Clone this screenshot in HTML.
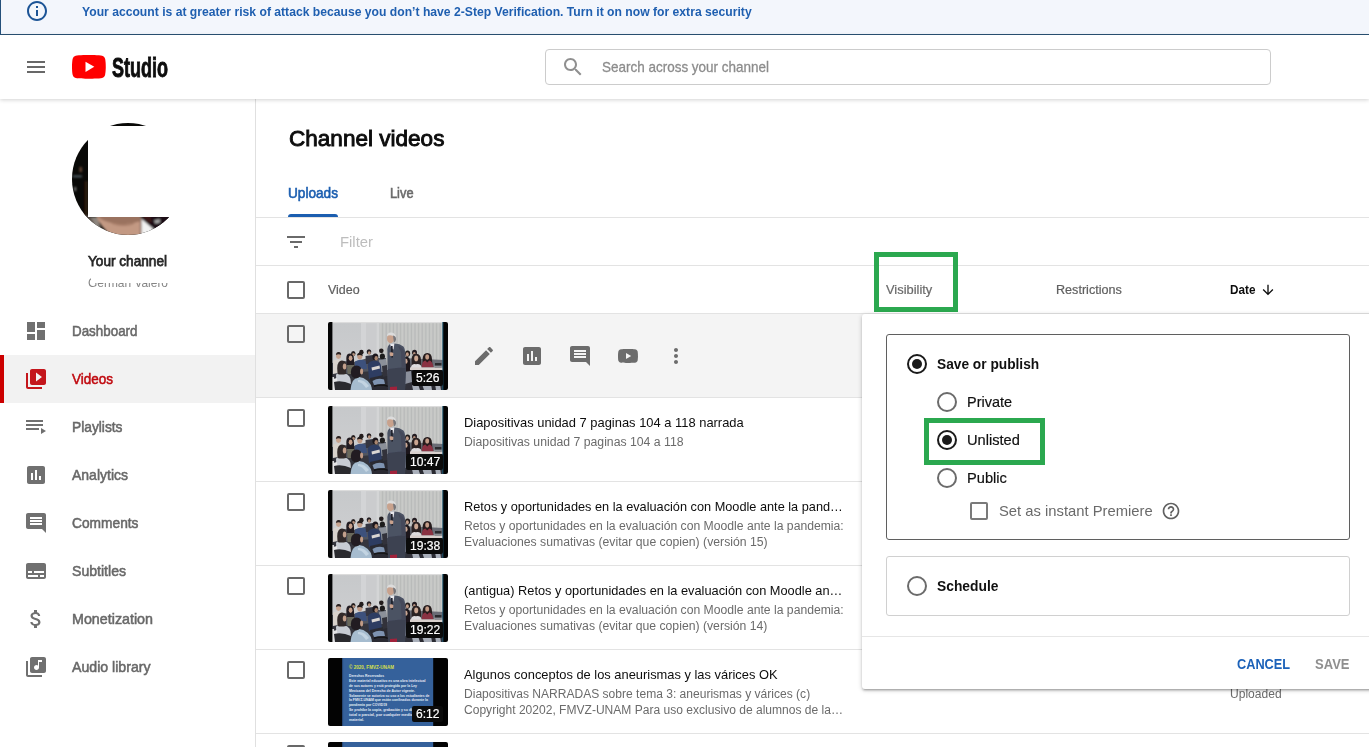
<!DOCTYPE html>
<html lang="en"><head><meta charset="utf-8"><title>Channel videos - YouTube Studio</title>
<style>
*{box-sizing:border-box}
html,body{margin:0;padding:0}
body{width:1369px;height:747px;overflow:hidden;position:relative;background:#fff;font-family:"Liberation Sans",Arial,sans-serif}
.t{position:absolute;white-space:nowrap;line-height:1;transform-origin:0 50%;display:block}
.ic{position:absolute;display:block}
.abs{position:absolute}
.hl{position:absolute;height:1px;background:#e3e3e3}
#banner{position:absolute;left:0;top:0;width:1369px;height:35px;background:#f3f6fc;border-left:1px solid #24507a;border-bottom:1px solid #2a5274}
#header{position:absolute;left:0;top:35px;width:1369px;height:64px;background:#fff;box-shadow:0 1px 4px rgba(0,0,0,.18);z-index:5}
#search{position:absolute;left:545px;top:14px;width:726px;height:36px;border:1px solid #ccc;border-radius:4px;background:#fff}
#side{position:absolute;left:0;top:99px;width:256px;height:648px;background:#fff;border-right:1px solid #e0e0e0}
#main{position:absolute;left:256px;top:99px;width:1113px;height:648px;background:#fff}
.nav{position:absolute;left:0;width:255px;height:48px}
.nav.on{background:#f2f2f2;border-left:4px solid #cc0000}
.cb{position:absolute;width:18px;height:18px;border:2px solid #686868;border-radius:2px;background:transparent}
.row{position:absolute;left:256px;width:1113px;height:84px;border-top:1px solid #e3e3e3}
.thumb{position:absolute;left:328px;width:120px;height:68px;border-radius:2px;overflow:hidden;display:block}
.thumb text{font-family:"Liberation Sans",Arial,sans-serif}
.dur{position:absolute;height:16px;background:#0b0b0b;border-radius:2px}
.green{position:absolute;border:5px solid #2ba84f}
.radio{position:absolute;width:20px;height:20px;border-radius:50%;border:2px solid #6b6b6b;background:#fff}
.radio.on{border-color:#1a1a1a}
.radio.on:after{content:"";position:absolute;left:3px;top:3px;width:10px;height:10px;border-radius:50%;background:#1a1a1a}
#pop{position:absolute;left:862px;top:314px;width:520px;height:375px;background:#fff;border-radius:3px;box-shadow:0 2px 2px 0 rgba(0,0,0,.14),0 3px 1px -2px rgba(0,0,0,.12),0 1px 5px 0 rgba(0,0,0,.2);z-index:8}
</style></head>
<body>
<div role="alert">
<div id="banner"></div>
<svg class="ic" style="left:25px;top:-1px" width="24" height="24" viewBox="0 0 24 24" fill="#1c5496" ><path d="M11 17h2v-6h-2v6zm1-15C6.48 2 2 6.48 2 12s4.48 10 10 10 10-4.48 10-10S17.52 2 12 2zm0 18c-4.41 0-8-3.59-8-8s3.59-8 8-8 8 3.59 8 8-3.59 8-8 8zM11 9h2V7h-2v2z"/></svg>
<span class="t" style="left:81.5px;top:5px;font-size:13px;color:#1f5fb0;font-weight:700;transform:scaleX(0.9351);">Your account is at greater risk of attack because you don’t have 2-Step Verification. Turn it on now for extra security</span>
</div>
<header id="header">
<svg class="ic" style="left:24px;top:20px" width="24" height="24" viewBox="0 0 24 24" fill="#686868" ><path d="M3 18h18v-2H3v2zm0-5h18v-2H3v2zm0-7v2h18V6H3z"/></svg>
<svg class="ic" style="left:72.2px;top:19.9px" width="33.8" height="23.7" viewBox="0 0 28.57 20" preserveAspectRatio="none"><path fill="#ff0000" d="M27.9727 3.12324C27.6435 1.89323 26.6768 0.926623 25.4468 0.597366C23.2197 0 14.285 0 14.285 0C14.285 0 5.35042 0 3.12323 0.597366C1.89323 0.926623 0.926623 1.89323 0.597366 3.12324C0 5.35042 0 10 0 10C0 10 0 14.6496 0.597366 16.8768C0.926623 18.1068 1.89323 19.0734 3.12323 19.4026C5.35042 20 14.285 20 14.285 20C14.285 20 23.2197 20 25.4468 19.4026C26.6768 19.0734 27.6435 18.1068 27.9727 16.8768C28.5701 14.6496 28.5701 10 28.5701 10C28.5701 10 28.5677 5.35042 27.9727 3.12324Z"/><path fill="#fff" d="M11.4253 14.2854L18.8477 10.0004L11.4253 5.71533V14.2854Z"/></svg>
<span class="t" style="left:112px;top:20px;font-size:27px;color:#0d0d0d;font-weight:700;-webkit-text-stroke:0.9px #0d0d0d;transform:scaleX(0.6668);">Studio</span>
<div id="search"></div>
<svg class="ic" style="left:561px;top:20.2px" width="24" height="24" viewBox="0 0 24 24" fill="#909090" ><path d="M15.5 14h-.79l-.28-.27C15.41 12.59 16 11.11 16 9.5 16 5.91 13.09 3 9.5 3S3 5.91 3 9.5 5.91 16 9.5 16c1.61 0 3.09-.59 4.23-1.57l.27.28v.79l5 4.99L20.49 19l-4.99-5zm-6 0C7.01 14 5 11.99 5 9.5S7.01 5 9.5 5 14 7.01 14 9.5 11.99 14 9.5 14z"/></svg>
<span class="t" style="left:602px;top:24px;font-size:15px;color:#8c8c8c;-webkit-text-stroke:0.3px #8c8c8c;transform:scaleX(0.8982);">Search across your channel</span>
</header>
<nav>
<div id="side"></div>
<svg class="ic" style="left:72px;top:122.9px" width="112" height="112" viewBox="0 0 112 112">
<defs><clipPath id="avc"><circle cx="56" cy="56" r="56"/></clipPath><filter id="avb" x="-10%" y="-10%" width="120%" height="120%"><feGaussianBlur stdDeviation="0.9"/></filter></defs>
<g clip-path="url(#avc)"><rect width="112" height="112" fill="#090907"/>
<g filter="url(#avb)">
<rect x="7.5" y="44" width="2.4" height="5" fill="#6a4a3a"/>
<rect x="1" y="52.6" width="9" height="1.6" fill="#5c6e78"/>
<rect x="12.5" y="58" width="3.5" height="36" fill="#2c1b0c"/>
<rect x="2.6" y="64" width="1.2" height="4" fill="#c8c8c8"/>
<path d="M6 94 L26 94 L30 112 L14 112z" fill="#8d857e"/>
<path d="M6 93 L18 93 L22 100 L10 104z" fill="#5a5048"/>
<path d="M24 92 L69 92 L69 113 L40 113 Q28 104 24 92z" fill="#c39983"/>
<path d="M24 92 L69 92 L69 98 Q58 102 46 101 Q32 100 24 92z" fill="#9a725e"/>
<path d="M40 99 Q52 103 62 99 L62 101 Q52 105 40 101z" fill="#a67c67"/>
<path d="M68.6 94 L82 106 L74 113 L68.6 113z" fill="#f2f2f2"/>
<path d="M68 96 L69.4 96 L69.4 113 L68 113z" fill="#7a5848"/>
<path d="M68.6 92 L112 92 L112 100 L84 108 L68.6 95z" fill="#1a1112"/>
<path d="M69 92 L78 92 L80 99 L76 100z" fill="#3a1414"/>
<path d="M82 97.5 L87.6 96 L88.4 99.2 L83.4 100.8z" fill="#a8a8a8"/>
</g></g></svg>
<div class="abs" style="left:88px;top:126.2px;width:100px;height:90.6px;background:#fff"></div>
<span class="t" style="left:88px;top:253px;font-size:15px;color:#282828;-webkit-text-stroke:0.75px #282828;transform:scaleX(0.9078);">Your channel</span>
<span class="t" style="left:88px;top:276px;font-size:13px;color:#858585;transform:scaleX(0.9176);">German Valero</span>
<div class="abs" style="left:91px;top:270px;width:84px;height:13.3px;background:#fff"></div>
<div class="nav" style="top:307px"></div>
<svg class="ic" style="left:24px;top:319px" width="24" height="24" viewBox="0 0 24 24" fill="#707070" ><path d="M3 13h8V3H3v10zm0 8h8v-6H3v6zm10 0h8V11h-8v10zm0-18v6h8V3h-8z"/></svg>
<span class="t" style="left:72px;top:323px;font-size:15px;color:#686868;-webkit-text-stroke:0.55px #686868;transform:scaleX(0.8926);">Dashboard</span>
<div class="nav on" style="top:355px"></div>
<svg class="ic" style="left:24px;top:367px" width="24" height="24" viewBox="0 0 24 24" fill="#c4161c" ><path d="M4 6H2v14c0 1.1.9 2 2 2h14v-2H4V6zm16-4H8c-1.1 0-2 .9-2 2v12c0 1.1.9 2 2 2h12c1.1 0 2-.9 2-2V4c0-1.1-.9-2-2-2zm-8 12.5v-9l6 4.5-6 4.5z"/></svg>
<span class="t" style="left:72px;top:371px;font-size:15px;color:#c00a10;-webkit-text-stroke:0.55px #c00a10;transform:scaleX(0.8992);">Videos</span>
<div class="nav" style="top:403px"></div>
<svg class="ic" style="left:24px;top:415px" width="24" height="24" viewBox="0 0 24 24" fill="#707070" ><path d="M19 9H2v2h17V9zm0-4H2v2h17V5zM2 15h13v-2H2v2zm15-2v6l5-3-5-3z"/></svg>
<span class="t" style="left:72px;top:419px;font-size:15px;color:#686868;-webkit-text-stroke:0.55px #686868;transform:scaleX(0.9180);">Playlists</span>
<div class="nav" style="top:451px"></div>
<svg class="ic" style="left:24px;top:463px" width="24" height="24" viewBox="0 0 24 24" fill="#707070" ><path d="M19 3H5c-1.1 0-2 .9-2 2v14c0 1.1.9 2 2 2h14c1.1 0 2-.9 2-2V5c0-1.1-.9-2-2-2zM9 17H7v-7h2v7zm4 0h-2V7h2v10zm4 0h-2v-4h2v4z"/></svg>
<span class="t" style="left:72px;top:467px;font-size:15px;color:#686868;-webkit-text-stroke:0.55px #686868;transform:scaleX(0.9330);">Analytics</span>
<div class="nav" style="top:499px"></div>
<svg class="ic" style="left:24px;top:511px" width="24" height="24" viewBox="0 0 24 24" fill="#707070" ><path d="M21.99 4c0-1.1-.89-2-1.99-2H4c-1.1 0-2 .9-2 2v12c0 1.1.9 2 2 2h14l4 4-.01-18zM18 14H6v-2h12v2zm0-3H6V9h12v2zm0-3H6V6h12v2z"/></svg>
<span class="t" style="left:72px;top:515px;font-size:15px;color:#686868;-webkit-text-stroke:0.55px #686868;transform:scaleX(0.9170);">Comments</span>
<div class="nav" style="top:547px"></div>
<svg class="ic" style="left:24px;top:559px" width="24" height="24" viewBox="0 0 24 24" fill="#707070" ><path d="M20 4H4c-1.1 0-2 .9-2 2v12c0 1.1.9 2 2 2h16c1.1 0 2-.9 2-2V6c0-1.1-.9-2-2-2zM4 12h4v2H4v-2zm10 6H4v-2h10v2zm6 0h-4v-2h4v2zm0-4H10v-2h10v2z"/></svg>
<span class="t" style="left:72px;top:563px;font-size:15px;color:#686868;-webkit-text-stroke:0.55px #686868;transform:scaleX(0.9386);">Subtitles</span>
<div class="nav" style="top:595px"></div>
<svg class="ic" style="left:24px;top:607px" width="24" height="24" viewBox="0 0 24 24" fill="#707070" ><path d="M11.8 10.9c-2.27-.59-3-1.2-3-2.15 0-1.09 1.01-1.85 2.7-1.85 1.78 0 2.44.85 2.5 2.1h2.21c-.07-1.72-1.12-3.3-3.21-3.81V3h-3v2.16c-1.94.42-3.5 1.68-3.5 3.61 0 2.31 1.91 3.46 4.7 4.13 2.5.6 3 1.48 3 2.41 0 .69-.49 1.79-2.7 1.79-2.06 0-2.87-.92-2.98-2.1h-2.2c.12 2.19 1.76 3.42 3.68 3.83V21h3v-2.15c1.95-.37 3.5-1.5 3.5-3.55 0-2.84-2.43-3.81-4.7-4.4z"/></svg>
<span class="t" style="left:72px;top:611px;font-size:15px;color:#686868;-webkit-text-stroke:0.55px #686868;transform:scaleX(0.9524);">Monetization</span>
<div class="nav" style="top:643px"></div>
<svg class="ic" style="left:24px;top:655px" width="24" height="24" viewBox="0 0 24 24" fill="#707070" ><path d="M20 2H8c-1.1 0-2 .9-2 2v12c0 1.1.9 2 2 2h12c1.1 0 2-.9 2-2V4c0-1.1-.9-2-2-2zm-2 5h-3v5.5c0 1.38-1.12 2.5-2.5 2.5S10 13.88 10 12.5s1.12-2.5 2.5-2.5c.57 0 1.08.19 1.5.51V5h4v2zM4 6H2v14c0 1.1.9 2 2 2h14v-2H4V6z"/></svg>
<span class="t" style="left:72px;top:659px;font-size:15px;color:#686868;-webkit-text-stroke:0.55px #686868;transform:scaleX(0.9416);">Audio library</span>
</nav>
<main>
<div id="main"></div>
<span class="t" style="left:288.6px;top:128px;font-size:22px;color:#0d0d0d;-webkit-text-stroke:0.9px #0d0d0d;transform:scaleX(1.0247);">Channel videos</span>
<span class="t" style="left:288px;top:185px;font-size:15px;color:#1b5eb0;-webkit-text-stroke:0.6px #1b5eb0;transform:scaleX(0.9085);">Uploads</span>
<span class="t" style="left:390px;top:185px;font-size:15px;color:#6a6a6a;-webkit-text-stroke:0.6px #6a6a6a;transform:scaleX(0.8540);">Live</span>
<div class="abs" style="left:288px;top:214px;width:50px;height:3px;background:#1b5eb0;border-radius:3px 3px 0 0"></div>
<div class="hl" style="left:256px;top:217px;width:1113px"></div>
<svg class="ic" style="left:284px;top:230px" width="24" height="24" viewBox="0 0 24 24" fill="#6a6a6a" ><path d="M10 18h4v-2h-4v2zM3 6v2h18V6H3zm3 7h12v-2H6v2z"/></svg>
<span class="t" style="left:340px;top:234px;font-size:15px;color:#bdbdbd;transform:scaleX(0.9900);">Filter</span>
<div class="hl" style="left:256px;top:265px;width:1113px"></div>
<div class="cb" style="left:287px;top:281px"></div>
<span class="t" style="left:328px;top:284px;font-size:12px;color:#606060;-webkit-text-stroke:0.2px #606060;transform:scaleX(1.0402);">Video</span>
<span class="t" style="left:886px;top:284px;font-size:12px;color:#6a6a6a;-webkit-text-stroke:0.2px #6a6a6a;transform:scaleX(1.0736);">Visibility</span>
<span class="t" style="left:1056px;top:284px;font-size:12px;color:#606060;-webkit-text-stroke:0.2px #606060;transform:scaleX(1.0497);">Restrictions</span>
<span class="t" style="left:1230.2px;top:284px;font-size:12px;color:#0d0d0d;font-weight:700;transform:scaleX(0.9765);">Date</span>
<svg class="ic" style="left:1259.6px;top:282px" width="16" height="16" viewBox="0 0 24 24" fill="#0d0d0d" ><path d="M20 12l-1.41-1.41L13 16.17V4h-2v12.17l-5.58-5.59L4 12l8 8 8-8z"/></svg>
<div class="row" style="top:313px;background:#f4f4f4;"></div>
<div class="cb" style="left:287px;top:325px"></div>
<div class="row" style="top:397px;"></div>
<div class="cb" style="left:287px;top:409px"></div>
<div class="row" style="top:481px;"></div>
<div class="cb" style="left:287px;top:493px"></div>
<div class="row" style="top:565px;"></div>
<div class="cb" style="left:287px;top:577px"></div>
<div class="row" style="top:649px;"></div>
<div class="cb" style="left:287px;top:661px"></div>
<div class="row" style="top:733px;"></div>
<div class="cb" style="left:287px;top:745px"></div>
<svg class="thumb" style="top:322px" width="120" height="68" viewBox="0 0 120 68"><defs><filter id="pb0" x="-5%" y="-5%" width="110%" height="110%"><feGaussianBlur stdDeviation="0.75"/></filter><clipPath id="pc0"><rect x="4.4" y="0" width="110.4" height="68"/></clipPath><linearGradient id="pg0" x1="0" y1="0" x2="0" y2="1"><stop offset="0" stop-color="#c6c8ca"/><stop offset="1" stop-color="#d0d1d3"/></linearGradient></defs><rect width="120" height="68" fill="#040404"/><g clip-path="url(#pc0)"><g filter="url(#pb0)"><rect x="0" y="-2" width="120" height="72" fill="url(#pg0)"/><rect x="33" y="0" width="5" height="44" fill="#d3d4d6"/><rect x="38" y="0" width="10" height="44" fill="#cbccce"/><rect x="48.5" y="0" width="3" height="44" fill="#d4d5d6"/><rect x="51.5" y="0" width="64" height="48" fill="#c2c4c3"/><rect x="52.0" y="0" width="1.5" height="48" fill="#c9cac8"/><rect x="54.2" y="0" width="0.9" height="48" fill="#b8bab9"/><rect x="55.6" y="0" width="1.5" height="48" fill="#c9cac8"/><rect x="57.8" y="0" width="0.9" height="48" fill="#b8bab9"/><rect x="59.2" y="0" width="1.5" height="48" fill="#c9cac8"/><rect x="61.4" y="0" width="0.9" height="48" fill="#b8bab9"/><rect x="62.8" y="0" width="1.5" height="48" fill="#c9cac8"/><rect x="65.0" y="0" width="0.9" height="48" fill="#b8bab9"/><rect x="66.4" y="0" width="1.5" height="48" fill="#c9cac8"/><rect x="68.6" y="0" width="0.9" height="48" fill="#b8bab9"/><rect x="70.0" y="0" width="1.5" height="48" fill="#c9cac8"/><rect x="72.2" y="0" width="0.9" height="48" fill="#b8bab9"/><rect x="73.6" y="0" width="1.5" height="48" fill="#c9cac8"/><rect x="75.8" y="0" width="0.9" height="48" fill="#b8bab9"/><rect x="77.2" y="0" width="1.5" height="48" fill="#c9cac8"/><rect x="79.4" y="0" width="0.9" height="48" fill="#b8bab9"/><rect x="80.8" y="0" width="1.5" height="48" fill="#c9cac8"/><rect x="83.0" y="0" width="0.9" height="48" fill="#b8bab9"/><rect x="84.4" y="0" width="1.5" height="48" fill="#c9cac8"/><rect x="86.6" y="0" width="0.9" height="48" fill="#b8bab9"/><rect x="88.0" y="0" width="1.5" height="48" fill="#c9cac8"/><rect x="90.2" y="0" width="0.9" height="48" fill="#b8bab9"/><rect x="91.6" y="0" width="1.5" height="48" fill="#c9cac8"/><rect x="93.8" y="0" width="0.9" height="48" fill="#b8bab9"/><rect x="95.2" y="0" width="1.5" height="48" fill="#c9cac8"/><rect x="97.4" y="0" width="0.9" height="48" fill="#b8bab9"/><rect x="98.8" y="0" width="1.5" height="48" fill="#c9cac8"/><rect x="101.0" y="0" width="0.9" height="48" fill="#b8bab9"/><rect x="102.4" y="0" width="1.5" height="48" fill="#c9cac8"/><rect x="104.6" y="0" width="0.9" height="48" fill="#b8bab9"/><rect x="106.0" y="0" width="1.5" height="48" fill="#c9cac8"/><rect x="108.2" y="0" width="0.9" height="48" fill="#b8bab9"/><rect x="109.6" y="0" width="1.5" height="48" fill="#c9cac8"/><rect x="111.8" y="0" width="0.9" height="48" fill="#b8bab9"/><rect x="113.2" y="0" width="1.5" height="48" fill="#c9cac8"/><rect x="115.4" y="0" width="0.9" height="48" fill="#b8bab9"/><rect x="0" y="-1" width="120" height="2.1" fill="#dcdcdc"/><path d="M4 41 L16 39 L26 40 L40 36 L58 36 L60 68 L4 68z" fill="#51545f"/><path d="M4 52 L60 48 L60 68 L4 68z" fill="#34363e"/><rect x="4" y="55" width="2" height="13" fill="#dcdcdc"/><path d="M74 36 L116 38 L116 48 L74 48z" fill="#6a6c74"/><path d="M5 39 Q9 36 13 38.5 L14 50 L5 52z" fill="#d8d2cc"/><ellipse cx="10.5" cy="33.6" rx="2.5" ry="3.3" fill="#c7a48f" /><path d="M7.9 33 Q8.2 29.8 10.8 30 Q13.4 30.2 13.1 33 Q10.5 31.6 7.9 33z" fill="#2b2424"/><ellipse cx="25.3" cy="31.6" rx="2.2" ry="2.6" fill="#241e1f" /><ellipse cx="25.5" cy="32.6" rx="1.4" ry="1.6" fill="#b8937f" /><ellipse cx="33.4" cy="30.2" rx="2.2" ry="2.4" fill="#231d1e" /><path d="M27 39.5 Q32 36.5 38 39 L39 47 L27 47z" fill="#3c517c"/><ellipse cx="31.8" cy="34.3" rx="2.6" ry="3.1" fill="#c09a85" /><path d="M29 33.6 Q29.4 30.6 32 30.8 Q34.8 31 34.6 34 Q32 32.4 29 33.6z" fill="#211b1c"/><path d="M18.3 36 Q18.5 31.6 22 31.6 Q25.8 31.8 26 37 L26.4 46 L18.6 46z" fill="#231d20"/><ellipse cx="22.6" cy="36.2" rx="1.9" ry="2.7" fill="#c5a08c" /><path d="M19 43 L26 43 L26.5 52 L19.5 52z" fill="#6a695c"/><ellipse cx="41" cy="29.8" rx="2.3" ry="2.5" fill="#241f20" /><ellipse cx="41.3" cy="31" rx="1.5" ry="1.7" fill="#b9947f" /><path d="M37.5 34 L45 33 L46 42 L38 42z" fill="#35363f"/><ellipse cx="53.3" cy="28.8" rx="2.3" ry="2.4" fill="#221d1f" /><ellipse cx="54.4" cy="34.4" rx="2.6" ry="3.0" fill="#1f1b1d" /><path d="M51 38 L58 37 L58.5 50 L51.5 50z" fill="#8b9099"/><path d="M39.8 43 Q41 38.6 47 38.8 Q52.4 39 53 44 L54 56 L41 57z" fill="#2e3c62"/><path d="M43.5 45.5 L51.5 43.6 L52 46.4 L44 48.4z" fill="#d9d5d2"/><ellipse cx="47.4" cy="35" rx="3.0" ry="3.6" fill="#1d191c" /><ellipse cx="48.2" cy="36.2" rx="1.7" ry="2.2" fill="#a98570" /><path d="M8 53 Q9 50 14 50.5 Q21 51.5 22.5 57 L23 63 L8.5 63z" fill="#c8ccd3"/><path d="M9.2 46 Q9.4 38.4 14 38.4 Q18.6 38.8 18.4 44 L18 52 Q13 53 9.6 52z" fill="#332c2a"/><ellipse cx="16.6" cy="44.6" rx="1.8" ry="3.0" fill="#c3a08c" /><path d="M5 57 L9 56 L10 68 L5 68z" fill="#e4e4e6"/><path d="M6 60 Q14 58 23 62 L23 68 L7 68z" fill="#2a2a2f"/><path d="M22.5 68 Q23.5 56 31 55 Q40 55.6 45.5 68z" fill="#a6bccf"/><path d="M30 58 Q36 57 41 64 L38 66 Q34 60 30 60z" fill="#c3d4e2"/><path d="M22.8 50 Q23 43.4 28.6 43.4 Q34 43.8 33.6 50 Q33.2 56 28 56.4 Q23 56 22.8 50z" fill="#231f21"/><ellipse cx="33.6" cy="49.4" rx="1.5" ry="3.0" fill="#c19b86" /><path d="M42 56 L60 52 L61 68 L44 68z" fill="#2a2b31"/><path d="M44.5 59 Q50 55.5 56 57.5 L57 62 L46 63z" fill="#7e93b0"/><path d="M46 63.5 Q53 61 60 63.5 L60 65 Q53 62.6 46 65z" fill="#131317"/><path d="M54 44 L59 43 L59.6 54 L55 55z" fill="#30323a"/><rect x="74" y="48" width="42" height="20" fill="#31333b"/><ellipse cx="79.6" cy="31.6" rx="2.6" ry="3.1" fill="#201b1d" /><ellipse cx="79.3" cy="32.3" rx="1.5" ry="2.0" fill="#c09b87" /><ellipse cx="86.5" cy="30.6" rx="2.5" ry="2.8" fill="#241e20" /><ellipse cx="86.3" cy="31.6" rx="1.3" ry="1.6" fill="#b6917d" /><path d="M74.4 41 Q74.4 34.6 78.2 34.6 Q82.2 34.8 82.2 41 L82.6 52 L74.6 52z" fill="#1c181b"/><ellipse cx="77.8" cy="39.2" rx="1.8" ry="2.6" fill="#c9a591" /><path d="M83.6 37 Q84 31.6 88.4 31.8 Q92.8 32 93 38 L93.4 46 L83.6 46z" fill="#2a2021"/><ellipse cx="88.2" cy="36.4" rx="2.0" ry="2.8" fill="#cba792" /><path d="M83 45 Q84 41.4 88 42.2 Q92.6 41.4 93.6 45 L93.6 47.6 L83 47.6z" fill="#dedcde"/><path d="M94.6 37 Q95 30.8 99.4 31 Q103.8 31.2 104 37 L104.4 43 L94.6 43z" fill="#261d1e"/><ellipse cx="99.2" cy="35" rx="2.0" ry="2.7" fill="#c49d88" /><path d="M93.8 44 Q94.4 38.8 97.4 38.6 L99.2 40.4 L101.2 38.6 Q104.6 39 105.4 45.6 L93.8 45.6z" fill="#8a3042"/><rect x="82" y="45.4" width="34" height="2.6" fill="#d9d1ce"/><rect x="107" y="41" width="6.4" height="4.2" fill="#2c2c2f"/><rect x="106" y="43.6" width="9" height="1.6" fill="#8d9096"/><path d="M76 50 L83 49 L84 60 L77 62z" fill="#8b909c"/><path d="M84 63 L112 62.4 L113 68 L85 68z" fill="#a9afba"/><path d="M90 62 L94 62 L96 68 L92 68z" fill="#2a2b31"/><path d="M103 62 L107 62 L108 68 L104 68z" fill="#2a2b31"/><path d="M59.4 30 Q58.6 23.4 63 21.8 Q70.4 20.4 75.4 24.4 Q77.4 27 77.4 34 L78 50 L77 68 L60 68 L59.4 50z" fill="#4b5264"/><path d="M60 47 L77.8 45 L77 68 L60 68z" fill="#3d4251"/><path d="M70 24 Q76 25 77 33 L77.4 46 L73.6 46 L73 30z" fill="#444a5a"/><path d="M62 21.8 L66.4 21.2 L65.6 27.4 L63.2 26z" fill="#e8e8ec"/><path d="M63 24 L64.6 24 L65 35.6 L63.2 35.6z" fill="#1d1f29"/><path d="M61.6 30.6 Q63.6 29.8 65.4 31 L65.2 33.8 Q63.4 34.6 61.8 33.6z" fill="#c9a28d"/><ellipse cx="62.6" cy="16.4" rx="3.6" ry="4.9" fill="#c8a28d" /><path d="M59 14.2 Q59.2 10.4 63.2 10.6 Q67.8 11 68 15.6 Q66 13.4 63.4 13.4 Q60.6 13 59 14.2z" fill="#dcdcdc"/><path d="M65 13.6 Q68.2 14 68 17.6 Q67.6 20 66 20.4 Q65.4 17 65 13.6z" fill="#77777b"/><path d="M62 65 L69 64.6 L69 68 L62 68z" fill="#a0223a"/></g></g><rect x="114.4" y="0" width="0.9" height="68" fill="#1c5a78"/></svg>
<svg class="thumb" style="top:406px" width="120" height="68" viewBox="0 0 120 68"><defs><filter id="pb1" x="-5%" y="-5%" width="110%" height="110%"><feGaussianBlur stdDeviation="0.75"/></filter><clipPath id="pc1"><rect x="4.4" y="0" width="110.4" height="68"/></clipPath><linearGradient id="pg1" x1="0" y1="0" x2="0" y2="1"><stop offset="0" stop-color="#c6c8ca"/><stop offset="1" stop-color="#d0d1d3"/></linearGradient></defs><rect width="120" height="68" fill="#040404"/><g clip-path="url(#pc1)"><g filter="url(#pb1)"><rect x="0" y="-2" width="120" height="72" fill="url(#pg1)"/><rect x="33" y="0" width="5" height="44" fill="#d3d4d6"/><rect x="38" y="0" width="10" height="44" fill="#cbccce"/><rect x="48.5" y="0" width="3" height="44" fill="#d4d5d6"/><rect x="51.5" y="0" width="64" height="48" fill="#c2c4c3"/><rect x="52.0" y="0" width="1.5" height="48" fill="#c9cac8"/><rect x="54.2" y="0" width="0.9" height="48" fill="#b8bab9"/><rect x="55.6" y="0" width="1.5" height="48" fill="#c9cac8"/><rect x="57.8" y="0" width="0.9" height="48" fill="#b8bab9"/><rect x="59.2" y="0" width="1.5" height="48" fill="#c9cac8"/><rect x="61.4" y="0" width="0.9" height="48" fill="#b8bab9"/><rect x="62.8" y="0" width="1.5" height="48" fill="#c9cac8"/><rect x="65.0" y="0" width="0.9" height="48" fill="#b8bab9"/><rect x="66.4" y="0" width="1.5" height="48" fill="#c9cac8"/><rect x="68.6" y="0" width="0.9" height="48" fill="#b8bab9"/><rect x="70.0" y="0" width="1.5" height="48" fill="#c9cac8"/><rect x="72.2" y="0" width="0.9" height="48" fill="#b8bab9"/><rect x="73.6" y="0" width="1.5" height="48" fill="#c9cac8"/><rect x="75.8" y="0" width="0.9" height="48" fill="#b8bab9"/><rect x="77.2" y="0" width="1.5" height="48" fill="#c9cac8"/><rect x="79.4" y="0" width="0.9" height="48" fill="#b8bab9"/><rect x="80.8" y="0" width="1.5" height="48" fill="#c9cac8"/><rect x="83.0" y="0" width="0.9" height="48" fill="#b8bab9"/><rect x="84.4" y="0" width="1.5" height="48" fill="#c9cac8"/><rect x="86.6" y="0" width="0.9" height="48" fill="#b8bab9"/><rect x="88.0" y="0" width="1.5" height="48" fill="#c9cac8"/><rect x="90.2" y="0" width="0.9" height="48" fill="#b8bab9"/><rect x="91.6" y="0" width="1.5" height="48" fill="#c9cac8"/><rect x="93.8" y="0" width="0.9" height="48" fill="#b8bab9"/><rect x="95.2" y="0" width="1.5" height="48" fill="#c9cac8"/><rect x="97.4" y="0" width="0.9" height="48" fill="#b8bab9"/><rect x="98.8" y="0" width="1.5" height="48" fill="#c9cac8"/><rect x="101.0" y="0" width="0.9" height="48" fill="#b8bab9"/><rect x="102.4" y="0" width="1.5" height="48" fill="#c9cac8"/><rect x="104.6" y="0" width="0.9" height="48" fill="#b8bab9"/><rect x="106.0" y="0" width="1.5" height="48" fill="#c9cac8"/><rect x="108.2" y="0" width="0.9" height="48" fill="#b8bab9"/><rect x="109.6" y="0" width="1.5" height="48" fill="#c9cac8"/><rect x="111.8" y="0" width="0.9" height="48" fill="#b8bab9"/><rect x="113.2" y="0" width="1.5" height="48" fill="#c9cac8"/><rect x="115.4" y="0" width="0.9" height="48" fill="#b8bab9"/><rect x="0" y="-1" width="120" height="2.1" fill="#dcdcdc"/><path d="M4 41 L16 39 L26 40 L40 36 L58 36 L60 68 L4 68z" fill="#51545f"/><path d="M4 52 L60 48 L60 68 L4 68z" fill="#34363e"/><rect x="4" y="55" width="2" height="13" fill="#dcdcdc"/><path d="M74 36 L116 38 L116 48 L74 48z" fill="#6a6c74"/><path d="M5 39 Q9 36 13 38.5 L14 50 L5 52z" fill="#d8d2cc"/><ellipse cx="10.5" cy="33.6" rx="2.5" ry="3.3" fill="#c7a48f" /><path d="M7.9 33 Q8.2 29.8 10.8 30 Q13.4 30.2 13.1 33 Q10.5 31.6 7.9 33z" fill="#2b2424"/><ellipse cx="25.3" cy="31.6" rx="2.2" ry="2.6" fill="#241e1f" /><ellipse cx="25.5" cy="32.6" rx="1.4" ry="1.6" fill="#b8937f" /><ellipse cx="33.4" cy="30.2" rx="2.2" ry="2.4" fill="#231d1e" /><path d="M27 39.5 Q32 36.5 38 39 L39 47 L27 47z" fill="#3c517c"/><ellipse cx="31.8" cy="34.3" rx="2.6" ry="3.1" fill="#c09a85" /><path d="M29 33.6 Q29.4 30.6 32 30.8 Q34.8 31 34.6 34 Q32 32.4 29 33.6z" fill="#211b1c"/><path d="M18.3 36 Q18.5 31.6 22 31.6 Q25.8 31.8 26 37 L26.4 46 L18.6 46z" fill="#231d20"/><ellipse cx="22.6" cy="36.2" rx="1.9" ry="2.7" fill="#c5a08c" /><path d="M19 43 L26 43 L26.5 52 L19.5 52z" fill="#6a695c"/><ellipse cx="41" cy="29.8" rx="2.3" ry="2.5" fill="#241f20" /><ellipse cx="41.3" cy="31" rx="1.5" ry="1.7" fill="#b9947f" /><path d="M37.5 34 L45 33 L46 42 L38 42z" fill="#35363f"/><ellipse cx="53.3" cy="28.8" rx="2.3" ry="2.4" fill="#221d1f" /><ellipse cx="54.4" cy="34.4" rx="2.6" ry="3.0" fill="#1f1b1d" /><path d="M51 38 L58 37 L58.5 50 L51.5 50z" fill="#8b9099"/><path d="M39.8 43 Q41 38.6 47 38.8 Q52.4 39 53 44 L54 56 L41 57z" fill="#2e3c62"/><path d="M43.5 45.5 L51.5 43.6 L52 46.4 L44 48.4z" fill="#d9d5d2"/><ellipse cx="47.4" cy="35" rx="3.0" ry="3.6" fill="#1d191c" /><ellipse cx="48.2" cy="36.2" rx="1.7" ry="2.2" fill="#a98570" /><path d="M8 53 Q9 50 14 50.5 Q21 51.5 22.5 57 L23 63 L8.5 63z" fill="#c8ccd3"/><path d="M9.2 46 Q9.4 38.4 14 38.4 Q18.6 38.8 18.4 44 L18 52 Q13 53 9.6 52z" fill="#332c2a"/><ellipse cx="16.6" cy="44.6" rx="1.8" ry="3.0" fill="#c3a08c" /><path d="M5 57 L9 56 L10 68 L5 68z" fill="#e4e4e6"/><path d="M6 60 Q14 58 23 62 L23 68 L7 68z" fill="#2a2a2f"/><path d="M22.5 68 Q23.5 56 31 55 Q40 55.6 45.5 68z" fill="#a6bccf"/><path d="M30 58 Q36 57 41 64 L38 66 Q34 60 30 60z" fill="#c3d4e2"/><path d="M22.8 50 Q23 43.4 28.6 43.4 Q34 43.8 33.6 50 Q33.2 56 28 56.4 Q23 56 22.8 50z" fill="#231f21"/><ellipse cx="33.6" cy="49.4" rx="1.5" ry="3.0" fill="#c19b86" /><path d="M42 56 L60 52 L61 68 L44 68z" fill="#2a2b31"/><path d="M44.5 59 Q50 55.5 56 57.5 L57 62 L46 63z" fill="#7e93b0"/><path d="M46 63.5 Q53 61 60 63.5 L60 65 Q53 62.6 46 65z" fill="#131317"/><path d="M54 44 L59 43 L59.6 54 L55 55z" fill="#30323a"/><rect x="74" y="48" width="42" height="20" fill="#31333b"/><ellipse cx="79.6" cy="31.6" rx="2.6" ry="3.1" fill="#201b1d" /><ellipse cx="79.3" cy="32.3" rx="1.5" ry="2.0" fill="#c09b87" /><ellipse cx="86.5" cy="30.6" rx="2.5" ry="2.8" fill="#241e20" /><ellipse cx="86.3" cy="31.6" rx="1.3" ry="1.6" fill="#b6917d" /><path d="M74.4 41 Q74.4 34.6 78.2 34.6 Q82.2 34.8 82.2 41 L82.6 52 L74.6 52z" fill="#1c181b"/><ellipse cx="77.8" cy="39.2" rx="1.8" ry="2.6" fill="#c9a591" /><path d="M83.6 37 Q84 31.6 88.4 31.8 Q92.8 32 93 38 L93.4 46 L83.6 46z" fill="#2a2021"/><ellipse cx="88.2" cy="36.4" rx="2.0" ry="2.8" fill="#cba792" /><path d="M83 45 Q84 41.4 88 42.2 Q92.6 41.4 93.6 45 L93.6 47.6 L83 47.6z" fill="#dedcde"/><path d="M94.6 37 Q95 30.8 99.4 31 Q103.8 31.2 104 37 L104.4 43 L94.6 43z" fill="#261d1e"/><ellipse cx="99.2" cy="35" rx="2.0" ry="2.7" fill="#c49d88" /><path d="M93.8 44 Q94.4 38.8 97.4 38.6 L99.2 40.4 L101.2 38.6 Q104.6 39 105.4 45.6 L93.8 45.6z" fill="#8a3042"/><rect x="82" y="45.4" width="34" height="2.6" fill="#d9d1ce"/><rect x="107" y="41" width="6.4" height="4.2" fill="#2c2c2f"/><rect x="106" y="43.6" width="9" height="1.6" fill="#8d9096"/><path d="M76 50 L83 49 L84 60 L77 62z" fill="#8b909c"/><path d="M84 63 L112 62.4 L113 68 L85 68z" fill="#a9afba"/><path d="M90 62 L94 62 L96 68 L92 68z" fill="#2a2b31"/><path d="M103 62 L107 62 L108 68 L104 68z" fill="#2a2b31"/><path d="M59.4 30 Q58.6 23.4 63 21.8 Q70.4 20.4 75.4 24.4 Q77.4 27 77.4 34 L78 50 L77 68 L60 68 L59.4 50z" fill="#4b5264"/><path d="M60 47 L77.8 45 L77 68 L60 68z" fill="#3d4251"/><path d="M70 24 Q76 25 77 33 L77.4 46 L73.6 46 L73 30z" fill="#444a5a"/><path d="M62 21.8 L66.4 21.2 L65.6 27.4 L63.2 26z" fill="#e8e8ec"/><path d="M63 24 L64.6 24 L65 35.6 L63.2 35.6z" fill="#1d1f29"/><path d="M61.6 30.6 Q63.6 29.8 65.4 31 L65.2 33.8 Q63.4 34.6 61.8 33.6z" fill="#c9a28d"/><ellipse cx="62.6" cy="16.4" rx="3.6" ry="4.9" fill="#c8a28d" /><path d="M59 14.2 Q59.2 10.4 63.2 10.6 Q67.8 11 68 15.6 Q66 13.4 63.4 13.4 Q60.6 13 59 14.2z" fill="#dcdcdc"/><path d="M65 13.6 Q68.2 14 68 17.6 Q67.6 20 66 20.4 Q65.4 17 65 13.6z" fill="#77777b"/><path d="M62 65 L69 64.6 L69 68 L62 68z" fill="#a0223a"/></g></g><rect x="114.4" y="0" width="0.9" height="68" fill="#1c5a78"/></svg>
<svg class="thumb" style="top:490px" width="120" height="68" viewBox="0 0 120 68"><defs><filter id="pb2" x="-5%" y="-5%" width="110%" height="110%"><feGaussianBlur stdDeviation="0.75"/></filter><clipPath id="pc2"><rect x="4.4" y="0" width="110.4" height="68"/></clipPath><linearGradient id="pg2" x1="0" y1="0" x2="0" y2="1"><stop offset="0" stop-color="#c6c8ca"/><stop offset="1" stop-color="#d0d1d3"/></linearGradient></defs><rect width="120" height="68" fill="#040404"/><g clip-path="url(#pc2)"><g filter="url(#pb2)"><rect x="0" y="-2" width="120" height="72" fill="url(#pg2)"/><rect x="33" y="0" width="5" height="44" fill="#d3d4d6"/><rect x="38" y="0" width="10" height="44" fill="#cbccce"/><rect x="48.5" y="0" width="3" height="44" fill="#d4d5d6"/><rect x="51.5" y="0" width="64" height="48" fill="#c2c4c3"/><rect x="52.0" y="0" width="1.5" height="48" fill="#c9cac8"/><rect x="54.2" y="0" width="0.9" height="48" fill="#b8bab9"/><rect x="55.6" y="0" width="1.5" height="48" fill="#c9cac8"/><rect x="57.8" y="0" width="0.9" height="48" fill="#b8bab9"/><rect x="59.2" y="0" width="1.5" height="48" fill="#c9cac8"/><rect x="61.4" y="0" width="0.9" height="48" fill="#b8bab9"/><rect x="62.8" y="0" width="1.5" height="48" fill="#c9cac8"/><rect x="65.0" y="0" width="0.9" height="48" fill="#b8bab9"/><rect x="66.4" y="0" width="1.5" height="48" fill="#c9cac8"/><rect x="68.6" y="0" width="0.9" height="48" fill="#b8bab9"/><rect x="70.0" y="0" width="1.5" height="48" fill="#c9cac8"/><rect x="72.2" y="0" width="0.9" height="48" fill="#b8bab9"/><rect x="73.6" y="0" width="1.5" height="48" fill="#c9cac8"/><rect x="75.8" y="0" width="0.9" height="48" fill="#b8bab9"/><rect x="77.2" y="0" width="1.5" height="48" fill="#c9cac8"/><rect x="79.4" y="0" width="0.9" height="48" fill="#b8bab9"/><rect x="80.8" y="0" width="1.5" height="48" fill="#c9cac8"/><rect x="83.0" y="0" width="0.9" height="48" fill="#b8bab9"/><rect x="84.4" y="0" width="1.5" height="48" fill="#c9cac8"/><rect x="86.6" y="0" width="0.9" height="48" fill="#b8bab9"/><rect x="88.0" y="0" width="1.5" height="48" fill="#c9cac8"/><rect x="90.2" y="0" width="0.9" height="48" fill="#b8bab9"/><rect x="91.6" y="0" width="1.5" height="48" fill="#c9cac8"/><rect x="93.8" y="0" width="0.9" height="48" fill="#b8bab9"/><rect x="95.2" y="0" width="1.5" height="48" fill="#c9cac8"/><rect x="97.4" y="0" width="0.9" height="48" fill="#b8bab9"/><rect x="98.8" y="0" width="1.5" height="48" fill="#c9cac8"/><rect x="101.0" y="0" width="0.9" height="48" fill="#b8bab9"/><rect x="102.4" y="0" width="1.5" height="48" fill="#c9cac8"/><rect x="104.6" y="0" width="0.9" height="48" fill="#b8bab9"/><rect x="106.0" y="0" width="1.5" height="48" fill="#c9cac8"/><rect x="108.2" y="0" width="0.9" height="48" fill="#b8bab9"/><rect x="109.6" y="0" width="1.5" height="48" fill="#c9cac8"/><rect x="111.8" y="0" width="0.9" height="48" fill="#b8bab9"/><rect x="113.2" y="0" width="1.5" height="48" fill="#c9cac8"/><rect x="115.4" y="0" width="0.9" height="48" fill="#b8bab9"/><rect x="0" y="-1" width="120" height="2.1" fill="#dcdcdc"/><path d="M4 41 L16 39 L26 40 L40 36 L58 36 L60 68 L4 68z" fill="#51545f"/><path d="M4 52 L60 48 L60 68 L4 68z" fill="#34363e"/><rect x="4" y="55" width="2" height="13" fill="#dcdcdc"/><path d="M74 36 L116 38 L116 48 L74 48z" fill="#6a6c74"/><path d="M5 39 Q9 36 13 38.5 L14 50 L5 52z" fill="#d8d2cc"/><ellipse cx="10.5" cy="33.6" rx="2.5" ry="3.3" fill="#c7a48f" /><path d="M7.9 33 Q8.2 29.8 10.8 30 Q13.4 30.2 13.1 33 Q10.5 31.6 7.9 33z" fill="#2b2424"/><ellipse cx="25.3" cy="31.6" rx="2.2" ry="2.6" fill="#241e1f" /><ellipse cx="25.5" cy="32.6" rx="1.4" ry="1.6" fill="#b8937f" /><ellipse cx="33.4" cy="30.2" rx="2.2" ry="2.4" fill="#231d1e" /><path d="M27 39.5 Q32 36.5 38 39 L39 47 L27 47z" fill="#3c517c"/><ellipse cx="31.8" cy="34.3" rx="2.6" ry="3.1" fill="#c09a85" /><path d="M29 33.6 Q29.4 30.6 32 30.8 Q34.8 31 34.6 34 Q32 32.4 29 33.6z" fill="#211b1c"/><path d="M18.3 36 Q18.5 31.6 22 31.6 Q25.8 31.8 26 37 L26.4 46 L18.6 46z" fill="#231d20"/><ellipse cx="22.6" cy="36.2" rx="1.9" ry="2.7" fill="#c5a08c" /><path d="M19 43 L26 43 L26.5 52 L19.5 52z" fill="#6a695c"/><ellipse cx="41" cy="29.8" rx="2.3" ry="2.5" fill="#241f20" /><ellipse cx="41.3" cy="31" rx="1.5" ry="1.7" fill="#b9947f" /><path d="M37.5 34 L45 33 L46 42 L38 42z" fill="#35363f"/><ellipse cx="53.3" cy="28.8" rx="2.3" ry="2.4" fill="#221d1f" /><ellipse cx="54.4" cy="34.4" rx="2.6" ry="3.0" fill="#1f1b1d" /><path d="M51 38 L58 37 L58.5 50 L51.5 50z" fill="#8b9099"/><path d="M39.8 43 Q41 38.6 47 38.8 Q52.4 39 53 44 L54 56 L41 57z" fill="#2e3c62"/><path d="M43.5 45.5 L51.5 43.6 L52 46.4 L44 48.4z" fill="#d9d5d2"/><ellipse cx="47.4" cy="35" rx="3.0" ry="3.6" fill="#1d191c" /><ellipse cx="48.2" cy="36.2" rx="1.7" ry="2.2" fill="#a98570" /><path d="M8 53 Q9 50 14 50.5 Q21 51.5 22.5 57 L23 63 L8.5 63z" fill="#c8ccd3"/><path d="M9.2 46 Q9.4 38.4 14 38.4 Q18.6 38.8 18.4 44 L18 52 Q13 53 9.6 52z" fill="#332c2a"/><ellipse cx="16.6" cy="44.6" rx="1.8" ry="3.0" fill="#c3a08c" /><path d="M5 57 L9 56 L10 68 L5 68z" fill="#e4e4e6"/><path d="M6 60 Q14 58 23 62 L23 68 L7 68z" fill="#2a2a2f"/><path d="M22.5 68 Q23.5 56 31 55 Q40 55.6 45.5 68z" fill="#a6bccf"/><path d="M30 58 Q36 57 41 64 L38 66 Q34 60 30 60z" fill="#c3d4e2"/><path d="M22.8 50 Q23 43.4 28.6 43.4 Q34 43.8 33.6 50 Q33.2 56 28 56.4 Q23 56 22.8 50z" fill="#231f21"/><ellipse cx="33.6" cy="49.4" rx="1.5" ry="3.0" fill="#c19b86" /><path d="M42 56 L60 52 L61 68 L44 68z" fill="#2a2b31"/><path d="M44.5 59 Q50 55.5 56 57.5 L57 62 L46 63z" fill="#7e93b0"/><path d="M46 63.5 Q53 61 60 63.5 L60 65 Q53 62.6 46 65z" fill="#131317"/><path d="M54 44 L59 43 L59.6 54 L55 55z" fill="#30323a"/><rect x="74" y="48" width="42" height="20" fill="#31333b"/><ellipse cx="79.6" cy="31.6" rx="2.6" ry="3.1" fill="#201b1d" /><ellipse cx="79.3" cy="32.3" rx="1.5" ry="2.0" fill="#c09b87" /><ellipse cx="86.5" cy="30.6" rx="2.5" ry="2.8" fill="#241e20" /><ellipse cx="86.3" cy="31.6" rx="1.3" ry="1.6" fill="#b6917d" /><path d="M74.4 41 Q74.4 34.6 78.2 34.6 Q82.2 34.8 82.2 41 L82.6 52 L74.6 52z" fill="#1c181b"/><ellipse cx="77.8" cy="39.2" rx="1.8" ry="2.6" fill="#c9a591" /><path d="M83.6 37 Q84 31.6 88.4 31.8 Q92.8 32 93 38 L93.4 46 L83.6 46z" fill="#2a2021"/><ellipse cx="88.2" cy="36.4" rx="2.0" ry="2.8" fill="#cba792" /><path d="M83 45 Q84 41.4 88 42.2 Q92.6 41.4 93.6 45 L93.6 47.6 L83 47.6z" fill="#dedcde"/><path d="M94.6 37 Q95 30.8 99.4 31 Q103.8 31.2 104 37 L104.4 43 L94.6 43z" fill="#261d1e"/><ellipse cx="99.2" cy="35" rx="2.0" ry="2.7" fill="#c49d88" /><path d="M93.8 44 Q94.4 38.8 97.4 38.6 L99.2 40.4 L101.2 38.6 Q104.6 39 105.4 45.6 L93.8 45.6z" fill="#8a3042"/><rect x="82" y="45.4" width="34" height="2.6" fill="#d9d1ce"/><rect x="107" y="41" width="6.4" height="4.2" fill="#2c2c2f"/><rect x="106" y="43.6" width="9" height="1.6" fill="#8d9096"/><path d="M76 50 L83 49 L84 60 L77 62z" fill="#8b909c"/><path d="M84 63 L112 62.4 L113 68 L85 68z" fill="#a9afba"/><path d="M90 62 L94 62 L96 68 L92 68z" fill="#2a2b31"/><path d="M103 62 L107 62 L108 68 L104 68z" fill="#2a2b31"/><path d="M59.4 30 Q58.6 23.4 63 21.8 Q70.4 20.4 75.4 24.4 Q77.4 27 77.4 34 L78 50 L77 68 L60 68 L59.4 50z" fill="#4b5264"/><path d="M60 47 L77.8 45 L77 68 L60 68z" fill="#3d4251"/><path d="M70 24 Q76 25 77 33 L77.4 46 L73.6 46 L73 30z" fill="#444a5a"/><path d="M62 21.8 L66.4 21.2 L65.6 27.4 L63.2 26z" fill="#e8e8ec"/><path d="M63 24 L64.6 24 L65 35.6 L63.2 35.6z" fill="#1d1f29"/><path d="M61.6 30.6 Q63.6 29.8 65.4 31 L65.2 33.8 Q63.4 34.6 61.8 33.6z" fill="#c9a28d"/><ellipse cx="62.6" cy="16.4" rx="3.6" ry="4.9" fill="#c8a28d" /><path d="M59 14.2 Q59.2 10.4 63.2 10.6 Q67.8 11 68 15.6 Q66 13.4 63.4 13.4 Q60.6 13 59 14.2z" fill="#dcdcdc"/><path d="M65 13.6 Q68.2 14 68 17.6 Q67.6 20 66 20.4 Q65.4 17 65 13.6z" fill="#77777b"/><path d="M62 65 L69 64.6 L69 68 L62 68z" fill="#a0223a"/></g></g><rect x="114.4" y="0" width="0.9" height="68" fill="#1c5a78"/></svg>
<svg class="thumb" style="top:574px" width="120" height="68" viewBox="0 0 120 68"><defs><filter id="pb3" x="-5%" y="-5%" width="110%" height="110%"><feGaussianBlur stdDeviation="0.75"/></filter><clipPath id="pc3"><rect x="4.4" y="0" width="110.4" height="68"/></clipPath><linearGradient id="pg3" x1="0" y1="0" x2="0" y2="1"><stop offset="0" stop-color="#c6c8ca"/><stop offset="1" stop-color="#d0d1d3"/></linearGradient></defs><rect width="120" height="68" fill="#040404"/><g clip-path="url(#pc3)"><g filter="url(#pb3)"><rect x="0" y="-2" width="120" height="72" fill="url(#pg3)"/><rect x="33" y="0" width="5" height="44" fill="#d3d4d6"/><rect x="38" y="0" width="10" height="44" fill="#cbccce"/><rect x="48.5" y="0" width="3" height="44" fill="#d4d5d6"/><rect x="51.5" y="0" width="64" height="48" fill="#c2c4c3"/><rect x="52.0" y="0" width="1.5" height="48" fill="#c9cac8"/><rect x="54.2" y="0" width="0.9" height="48" fill="#b8bab9"/><rect x="55.6" y="0" width="1.5" height="48" fill="#c9cac8"/><rect x="57.8" y="0" width="0.9" height="48" fill="#b8bab9"/><rect x="59.2" y="0" width="1.5" height="48" fill="#c9cac8"/><rect x="61.4" y="0" width="0.9" height="48" fill="#b8bab9"/><rect x="62.8" y="0" width="1.5" height="48" fill="#c9cac8"/><rect x="65.0" y="0" width="0.9" height="48" fill="#b8bab9"/><rect x="66.4" y="0" width="1.5" height="48" fill="#c9cac8"/><rect x="68.6" y="0" width="0.9" height="48" fill="#b8bab9"/><rect x="70.0" y="0" width="1.5" height="48" fill="#c9cac8"/><rect x="72.2" y="0" width="0.9" height="48" fill="#b8bab9"/><rect x="73.6" y="0" width="1.5" height="48" fill="#c9cac8"/><rect x="75.8" y="0" width="0.9" height="48" fill="#b8bab9"/><rect x="77.2" y="0" width="1.5" height="48" fill="#c9cac8"/><rect x="79.4" y="0" width="0.9" height="48" fill="#b8bab9"/><rect x="80.8" y="0" width="1.5" height="48" fill="#c9cac8"/><rect x="83.0" y="0" width="0.9" height="48" fill="#b8bab9"/><rect x="84.4" y="0" width="1.5" height="48" fill="#c9cac8"/><rect x="86.6" y="0" width="0.9" height="48" fill="#b8bab9"/><rect x="88.0" y="0" width="1.5" height="48" fill="#c9cac8"/><rect x="90.2" y="0" width="0.9" height="48" fill="#b8bab9"/><rect x="91.6" y="0" width="1.5" height="48" fill="#c9cac8"/><rect x="93.8" y="0" width="0.9" height="48" fill="#b8bab9"/><rect x="95.2" y="0" width="1.5" height="48" fill="#c9cac8"/><rect x="97.4" y="0" width="0.9" height="48" fill="#b8bab9"/><rect x="98.8" y="0" width="1.5" height="48" fill="#c9cac8"/><rect x="101.0" y="0" width="0.9" height="48" fill="#b8bab9"/><rect x="102.4" y="0" width="1.5" height="48" fill="#c9cac8"/><rect x="104.6" y="0" width="0.9" height="48" fill="#b8bab9"/><rect x="106.0" y="0" width="1.5" height="48" fill="#c9cac8"/><rect x="108.2" y="0" width="0.9" height="48" fill="#b8bab9"/><rect x="109.6" y="0" width="1.5" height="48" fill="#c9cac8"/><rect x="111.8" y="0" width="0.9" height="48" fill="#b8bab9"/><rect x="113.2" y="0" width="1.5" height="48" fill="#c9cac8"/><rect x="115.4" y="0" width="0.9" height="48" fill="#b8bab9"/><rect x="0" y="-1" width="120" height="2.1" fill="#dcdcdc"/><path d="M4 41 L16 39 L26 40 L40 36 L58 36 L60 68 L4 68z" fill="#51545f"/><path d="M4 52 L60 48 L60 68 L4 68z" fill="#34363e"/><rect x="4" y="55" width="2" height="13" fill="#dcdcdc"/><path d="M74 36 L116 38 L116 48 L74 48z" fill="#6a6c74"/><path d="M5 39 Q9 36 13 38.5 L14 50 L5 52z" fill="#d8d2cc"/><ellipse cx="10.5" cy="33.6" rx="2.5" ry="3.3" fill="#c7a48f" /><path d="M7.9 33 Q8.2 29.8 10.8 30 Q13.4 30.2 13.1 33 Q10.5 31.6 7.9 33z" fill="#2b2424"/><ellipse cx="25.3" cy="31.6" rx="2.2" ry="2.6" fill="#241e1f" /><ellipse cx="25.5" cy="32.6" rx="1.4" ry="1.6" fill="#b8937f" /><ellipse cx="33.4" cy="30.2" rx="2.2" ry="2.4" fill="#231d1e" /><path d="M27 39.5 Q32 36.5 38 39 L39 47 L27 47z" fill="#3c517c"/><ellipse cx="31.8" cy="34.3" rx="2.6" ry="3.1" fill="#c09a85" /><path d="M29 33.6 Q29.4 30.6 32 30.8 Q34.8 31 34.6 34 Q32 32.4 29 33.6z" fill="#211b1c"/><path d="M18.3 36 Q18.5 31.6 22 31.6 Q25.8 31.8 26 37 L26.4 46 L18.6 46z" fill="#231d20"/><ellipse cx="22.6" cy="36.2" rx="1.9" ry="2.7" fill="#c5a08c" /><path d="M19 43 L26 43 L26.5 52 L19.5 52z" fill="#6a695c"/><ellipse cx="41" cy="29.8" rx="2.3" ry="2.5" fill="#241f20" /><ellipse cx="41.3" cy="31" rx="1.5" ry="1.7" fill="#b9947f" /><path d="M37.5 34 L45 33 L46 42 L38 42z" fill="#35363f"/><ellipse cx="53.3" cy="28.8" rx="2.3" ry="2.4" fill="#221d1f" /><ellipse cx="54.4" cy="34.4" rx="2.6" ry="3.0" fill="#1f1b1d" /><path d="M51 38 L58 37 L58.5 50 L51.5 50z" fill="#8b9099"/><path d="M39.8 43 Q41 38.6 47 38.8 Q52.4 39 53 44 L54 56 L41 57z" fill="#2e3c62"/><path d="M43.5 45.5 L51.5 43.6 L52 46.4 L44 48.4z" fill="#d9d5d2"/><ellipse cx="47.4" cy="35" rx="3.0" ry="3.6" fill="#1d191c" /><ellipse cx="48.2" cy="36.2" rx="1.7" ry="2.2" fill="#a98570" /><path d="M8 53 Q9 50 14 50.5 Q21 51.5 22.5 57 L23 63 L8.5 63z" fill="#c8ccd3"/><path d="M9.2 46 Q9.4 38.4 14 38.4 Q18.6 38.8 18.4 44 L18 52 Q13 53 9.6 52z" fill="#332c2a"/><ellipse cx="16.6" cy="44.6" rx="1.8" ry="3.0" fill="#c3a08c" /><path d="M5 57 L9 56 L10 68 L5 68z" fill="#e4e4e6"/><path d="M6 60 Q14 58 23 62 L23 68 L7 68z" fill="#2a2a2f"/><path d="M22.5 68 Q23.5 56 31 55 Q40 55.6 45.5 68z" fill="#a6bccf"/><path d="M30 58 Q36 57 41 64 L38 66 Q34 60 30 60z" fill="#c3d4e2"/><path d="M22.8 50 Q23 43.4 28.6 43.4 Q34 43.8 33.6 50 Q33.2 56 28 56.4 Q23 56 22.8 50z" fill="#231f21"/><ellipse cx="33.6" cy="49.4" rx="1.5" ry="3.0" fill="#c19b86" /><path d="M42 56 L60 52 L61 68 L44 68z" fill="#2a2b31"/><path d="M44.5 59 Q50 55.5 56 57.5 L57 62 L46 63z" fill="#7e93b0"/><path d="M46 63.5 Q53 61 60 63.5 L60 65 Q53 62.6 46 65z" fill="#131317"/><path d="M54 44 L59 43 L59.6 54 L55 55z" fill="#30323a"/><rect x="74" y="48" width="42" height="20" fill="#31333b"/><ellipse cx="79.6" cy="31.6" rx="2.6" ry="3.1" fill="#201b1d" /><ellipse cx="79.3" cy="32.3" rx="1.5" ry="2.0" fill="#c09b87" /><ellipse cx="86.5" cy="30.6" rx="2.5" ry="2.8" fill="#241e20" /><ellipse cx="86.3" cy="31.6" rx="1.3" ry="1.6" fill="#b6917d" /><path d="M74.4 41 Q74.4 34.6 78.2 34.6 Q82.2 34.8 82.2 41 L82.6 52 L74.6 52z" fill="#1c181b"/><ellipse cx="77.8" cy="39.2" rx="1.8" ry="2.6" fill="#c9a591" /><path d="M83.6 37 Q84 31.6 88.4 31.8 Q92.8 32 93 38 L93.4 46 L83.6 46z" fill="#2a2021"/><ellipse cx="88.2" cy="36.4" rx="2.0" ry="2.8" fill="#cba792" /><path d="M83 45 Q84 41.4 88 42.2 Q92.6 41.4 93.6 45 L93.6 47.6 L83 47.6z" fill="#dedcde"/><path d="M94.6 37 Q95 30.8 99.4 31 Q103.8 31.2 104 37 L104.4 43 L94.6 43z" fill="#261d1e"/><ellipse cx="99.2" cy="35" rx="2.0" ry="2.7" fill="#c49d88" /><path d="M93.8 44 Q94.4 38.8 97.4 38.6 L99.2 40.4 L101.2 38.6 Q104.6 39 105.4 45.6 L93.8 45.6z" fill="#8a3042"/><rect x="82" y="45.4" width="34" height="2.6" fill="#d9d1ce"/><rect x="107" y="41" width="6.4" height="4.2" fill="#2c2c2f"/><rect x="106" y="43.6" width="9" height="1.6" fill="#8d9096"/><path d="M76 50 L83 49 L84 60 L77 62z" fill="#8b909c"/><path d="M84 63 L112 62.4 L113 68 L85 68z" fill="#a9afba"/><path d="M90 62 L94 62 L96 68 L92 68z" fill="#2a2b31"/><path d="M103 62 L107 62 L108 68 L104 68z" fill="#2a2b31"/><path d="M59.4 30 Q58.6 23.4 63 21.8 Q70.4 20.4 75.4 24.4 Q77.4 27 77.4 34 L78 50 L77 68 L60 68 L59.4 50z" fill="#4b5264"/><path d="M60 47 L77.8 45 L77 68 L60 68z" fill="#3d4251"/><path d="M70 24 Q76 25 77 33 L77.4 46 L73.6 46 L73 30z" fill="#444a5a"/><path d="M62 21.8 L66.4 21.2 L65.6 27.4 L63.2 26z" fill="#e8e8ec"/><path d="M63 24 L64.6 24 L65 35.6 L63.2 35.6z" fill="#1d1f29"/><path d="M61.6 30.6 Q63.6 29.8 65.4 31 L65.2 33.8 Q63.4 34.6 61.8 33.6z" fill="#c9a28d"/><ellipse cx="62.6" cy="16.4" rx="3.6" ry="4.9" fill="#c8a28d" /><path d="M59 14.2 Q59.2 10.4 63.2 10.6 Q67.8 11 68 15.6 Q66 13.4 63.4 13.4 Q60.6 13 59 14.2z" fill="#dcdcdc"/><path d="M65 13.6 Q68.2 14 68 17.6 Q67.6 20 66 20.4 Q65.4 17 65 13.6z" fill="#77777b"/><path d="M62 65 L69 64.6 L69 68 L62 68z" fill="#a0223a"/></g></g><rect x="114.4" y="0" width="0.9" height="68" fill="#1c5a78"/></svg>
<svg class="thumb" style="top:658px" width="120" height="68" viewBox="0 0 120 68" font-family="Liberation Sans, sans-serif"><rect width="120" height="68" fill="#030303"/><rect x="14.6" y="0" width="90.6" height="68" fill="#35619b"/><rect x="14.2" y="0" width="1" height="68" fill="#2b4f80"/><text x="21" y="10.6" font-size="4.6" font-weight="700" fill="#d5e04a" textLength="45" lengthAdjust="spacingAndGlyphs">© 2020, FMVZ-UNAM</text><text x="21" y="19.20" font-size="3.3" font-weight="700" fill="#e4eaf4" textLength="35" lengthAdjust="spacingAndGlyphs">Derechos Reservados</text><text x="21" y="24.05" font-size="3.3" font-weight="700" fill="#e4eaf4" textLength="76.5" lengthAdjust="spacingAndGlyphs">Este material educativo es una obra intelectual</text><text x="21" y="28.90" font-size="3.3" font-weight="700" fill="#e4eaf4" textLength="68" lengthAdjust="spacingAndGlyphs">de sus autores y está protegida por la Ley</text><text x="21" y="33.75" font-size="3.3" font-weight="700" fill="#e4eaf4" textLength="66" lengthAdjust="spacingAndGlyphs">Mexicana del Derecho de Autor vigente.</text><text x="21" y="38.60" font-size="3.3" font-weight="700" fill="#e4eaf4" textLength="80.5" lengthAdjust="spacingAndGlyphs">Solamente se autoriza su uso a los estudiantes de</text><text x="21" y="43.45" font-size="3.3" font-weight="700" fill="#e4eaf4" textLength="79" lengthAdjust="spacingAndGlyphs">la FMVZ-UNAM que están confinados durante la</text><text x="21" y="48.30" font-size="3.3" font-weight="700" fill="#e4eaf4" textLength="38" lengthAdjust="spacingAndGlyphs">pandemia por COVID19</text><text x="21" y="53.15" font-size="3.3" font-weight="700" fill="#e4eaf4" textLength="80" lengthAdjust="spacingAndGlyphs">Se prohíbe la copia, grabación y su distribución</text><text x="21" y="58.00" font-size="3.3" font-weight="700" fill="#e4eaf4" textLength="79" lengthAdjust="spacingAndGlyphs">total o parcial, por cualquier medio, de este</text><text x="21" y="62.85" font-size="3.3" font-weight="700" fill="#e4eaf4" textLength="15" lengthAdjust="spacingAndGlyphs">material.</text></svg>
<svg class="thumb" style="top:742px" width="120" height="68" viewBox="0 0 120 68" font-family="Liberation Sans, sans-serif"><rect width="120" height="68" fill="#030303"/><rect x="14.6" y="0" width="90.6" height="68" fill="#35619b"/><rect x="14.2" y="0" width="1" height="68" fill="#2b4f80"/></svg>
<div class="dur" style="left:412px;top:370px;width:31px"></div>
<span class="t" style="left:416px;top:372px;font-size:12px;color:#fff;-webkit-text-stroke:0.2px #fff;transform:scaleX(1.0062);">5:26</span>
<div class="dur" style="left:406px;top:454px;width:37px"></div>
<span class="t" style="left:410px;top:456px;font-size:12px;color:#fff;-webkit-text-stroke:0.2px #fff;transform:scaleX(1.0040);">10:47</span>
<div class="dur" style="left:406px;top:538px;width:37px"></div>
<span class="t" style="left:410px;top:540px;font-size:12px;color:#fff;-webkit-text-stroke:0.2px #fff;transform:scaleX(1.0040);">19:38</span>
<div class="dur" style="left:406px;top:622px;width:37px"></div>
<span class="t" style="left:410px;top:624px;font-size:12px;color:#fff;-webkit-text-stroke:0.2px #fff;transform:scaleX(1.0040);">19:22</span>
<div class="dur" style="left:412px;top:706px;width:31px"></div>
<span class="t" style="left:416px;top:708px;font-size:12px;color:#fff;-webkit-text-stroke:0.2px #fff;transform:scaleX(1.0062);">6:12</span>
<svg class="ic" style="left:472px;top:344px" width="24" height="24" viewBox="0 0 24 24" fill="#6c6c6c" ><path d="M3 17.25V21h3.75L17.81 9.94l-3.75-3.75L3 17.25zM20.71 7.04c.39-.39.39-1.02 0-1.41l-2.34-2.34c-.39-.39-1.02-.39-1.41 0l-1.83 1.83 3.75 3.75 1.83-1.83z"/></svg>
<svg class="ic" style="left:520px;top:344px" width="24" height="24" viewBox="0 0 24 24" fill="#6c6c6c" ><path d="M19 3H5c-1.1 0-2 .9-2 2v14c0 1.1.9 2 2 2h14c1.1 0 2-.9 2-2V5c0-1.1-.9-2-2-2zM9 17H7v-7h2v7zm4 0h-2V7h2v10zm4 0h-2v-4h2v4z"/></svg>
<svg class="ic" style="left:568px;top:344px" width="24" height="24" viewBox="0 0 24 24" fill="#6c6c6c" ><path d="M21.99 4c0-1.1-.89-2-1.99-2H4c-1.1 0-2 .9-2 2v12c0 1.1.9 2 2 2h14l4 4-.01-18zM18 14H6v-2h12v2zm0-3H6V9h12v2zm0-3H6V6h12v2z"/></svg>
<svg class="ic" style="left:616px;top:344px" width="24" height="24" viewBox="0 0 24 24" fill="#6c6c6c" ><path d="M21.58 7.19c-.23-.86-.91-1.54-1.77-1.77C18.25 5 12 5 12 5s-6.25 0-7.81.42c-.86.23-1.54.91-1.77 1.77C2 8.75 2 12 2 12s0 3.25.42 4.81c.23.86.91 1.54 1.77 1.77C5.75 19 12 19 12 19s6.25 0 7.81-.42c.86-.23 1.54-.91 1.77-1.77C22 15.25 22 12 22 12s0-3.25-.42-4.81zM10 15V9l5.2 3-5.2 3z"/></svg>
<svg class="ic" style="left:664px;top:344px" width="24" height="24" viewBox="0 0 24 24" fill="#6c6c6c" ><path d="M12 8c1.1 0 2-.9 2-2s-.9-2-2-2-2 .9-2 2 .9 2 2 2zm0 2c-1.1 0-2 .9-2 2s.9 2 2 2 2-.9 2-2-.9-2-2-2zm0 6c-1.1 0-2 .9-2 2s.9 2 2 2 2-.9 2-2-.9-2-2-2z"/></svg>
<span class="t" style="left:464.3px;top:416px;font-size:13px;color:#0d0d0d;transform:scaleX(0.9932);">Diapositivas unidad 7 paginas 104 a 118 narrada</span>
<span class="t" style="left:464.3px;top:436px;font-size:12px;color:#6b6b6b;transform:scaleX(1.0197);">Diapositivas unidad 7 paginas 104 a 118</span>
<span class="t" style="left:464.3px;top:500px;font-size:13px;color:#0d0d0d;transform:scaleX(0.9797);">Retos y oportunidades en la evaluación con Moodle ante la pand…</span>
<span class="t" style="left:464.3px;top:520px;font-size:12px;color:#6b6b6b;transform:scaleX(1.0146);">Retos y oportunidades en la evaluación con Moodle ante la pandemia:</span>
<span class="t" style="left:464.3px;top:536px;font-size:12px;color:#6b6b6b;transform:scaleX(1.0183);">Evaluaciones sumativas (evitar que copien) (versión 15)</span>
<span class="t" style="left:464.3px;top:584px;font-size:13px;color:#0d0d0d;transform:scaleX(0.9842);">(antigua) Retos y oportunidades en la evaluación con Moodle an…</span>
<span class="t" style="left:464.3px;top:604px;font-size:12px;color:#6b6b6b;transform:scaleX(1.0146);">Retos y oportunidades en la evaluación con Moodle ante la pandemia:</span>
<span class="t" style="left:464.3px;top:620px;font-size:12px;color:#6b6b6b;transform:scaleX(1.0176);">Evaluaciones sumativas (evitar que copien) (versión 14)</span>
<span class="t" style="left:464.3px;top:668px;font-size:13px;color:#0d0d0d;transform:scaleX(0.9906);">Algunos conceptos de los aneurismas y las várices OK</span>
<span class="t" style="left:464.3px;top:688px;font-size:12px;color:#6b6b6b;transform:scaleX(1.0040);">Diapositivas NARRADAS sobre tema 3: aneurismas y várices (c)</span>
<span class="t" style="left:464.3px;top:704px;font-size:12px;color:#6b6b6b;transform:scaleX(1.0040);">Copyright 20202, FMVZ-UNAM Para uso exclusivo de alumnos de la…</span>
<span class="t" style="left:1230.3px;top:688px;font-size:12px;color:#6b6b6b;transform:scaleX(1.0040);">Uploaded</span>
<div class="green" style="left:874px;top:252px;width:84px;height:60px"></div>
</main>
<div id="pop"></div>
<div role="dialog" class="abs" style="z-index:9;left:0;top:0">
<div class="abs" style="left:886px;top:334px;width:464px;height:206px;border:1px solid #5f5f5f;border-radius:3px"></div>
<div class="abs" style="left:886px;top:556px;width:464px;height:60px;border:1px solid #d0d0d0;border-radius:3px"></div>
<div class="hl" style="left:862px;top:636px;width:507px;background:#e6e6e6"></div>
<div class="radio on" style="left:907px;top:354px"></div>
<span class="t" style="left:936.5px;top:356px;font-size:15px;color:#111;font-weight:700;transform:scaleX(0.9150);">Save or publish</span>
<div class="radio" style="left:937px;top:392px"></div>
<span class="t" style="left:967.3px;top:394px;font-size:15px;color:#111;-webkit-text-stroke:0.2px #111;transform:scaleX(0.9639);">Private</span>
<div class="radio on" style="left:937px;top:430px"></div>
<span class="t" style="left:967.3px;top:432px;font-size:15px;color:#111;-webkit-text-stroke:0.2px #111;transform:scaleX(0.9762);">Unlisted</span>
<div class="radio" style="left:937px;top:468px"></div>
<span class="t" style="left:967.3px;top:470px;font-size:15px;color:#111;-webkit-text-stroke:0.2px #111;transform:scaleX(0.9766);">Public</span>
<div class="cb" style="left:970px;top:502px;border-color:#7a7a7a"></div>
<span class="t" style="left:999px;top:503px;font-size:15px;color:#6a6a6a;transform:scaleX(0.9859);">Set as instant Premiere</span>
<svg class="ic" style="left:1161px;top:501px" width="20" height="20" viewBox="0 0 24 24" fill="#606060" ><path d="M11 18h2v-2h-2v2zm1-16C6.48 2 2 6.48 2 12s4.48 10 10 10 10-4.48 10-10S17.52 2 12 2zm0 18c-4.41 0-8-3.59-8-8s3.59-8 8-8 8 3.59 8 8-3.59 8-8 8zm0-14c-2.21 0-4 1.79-4 4h2c0-1.1.9-2 2-2s2 .9 2 2c0 2-3 1.75-3 5h2c0-2.25 3-2.5 3-5 0-2.21-1.79-4-4-4z"/></svg>
<div class="radio" style="left:907px;top:576px"></div>
<span class="t" style="left:936.8px;top:578px;font-size:15px;color:#111;font-weight:700;transform:scaleX(0.9222);">Schedule</span>
<span class="t" style="left:1237.2px;top:657px;font-size:14px;color:#1c62b9;font-weight:700;transform:scaleX(0.9103);">CANCEL</span>
<span class="t" style="left:1314.9px;top:657px;font-size:14px;color:#8f8f8f;font-weight:700;transform:scaleX(0.9303);">SAVE</span>
<div class="green" style="left:924px;top:418px;width:121px;height:47px"></div>
</div>
</body></html>
